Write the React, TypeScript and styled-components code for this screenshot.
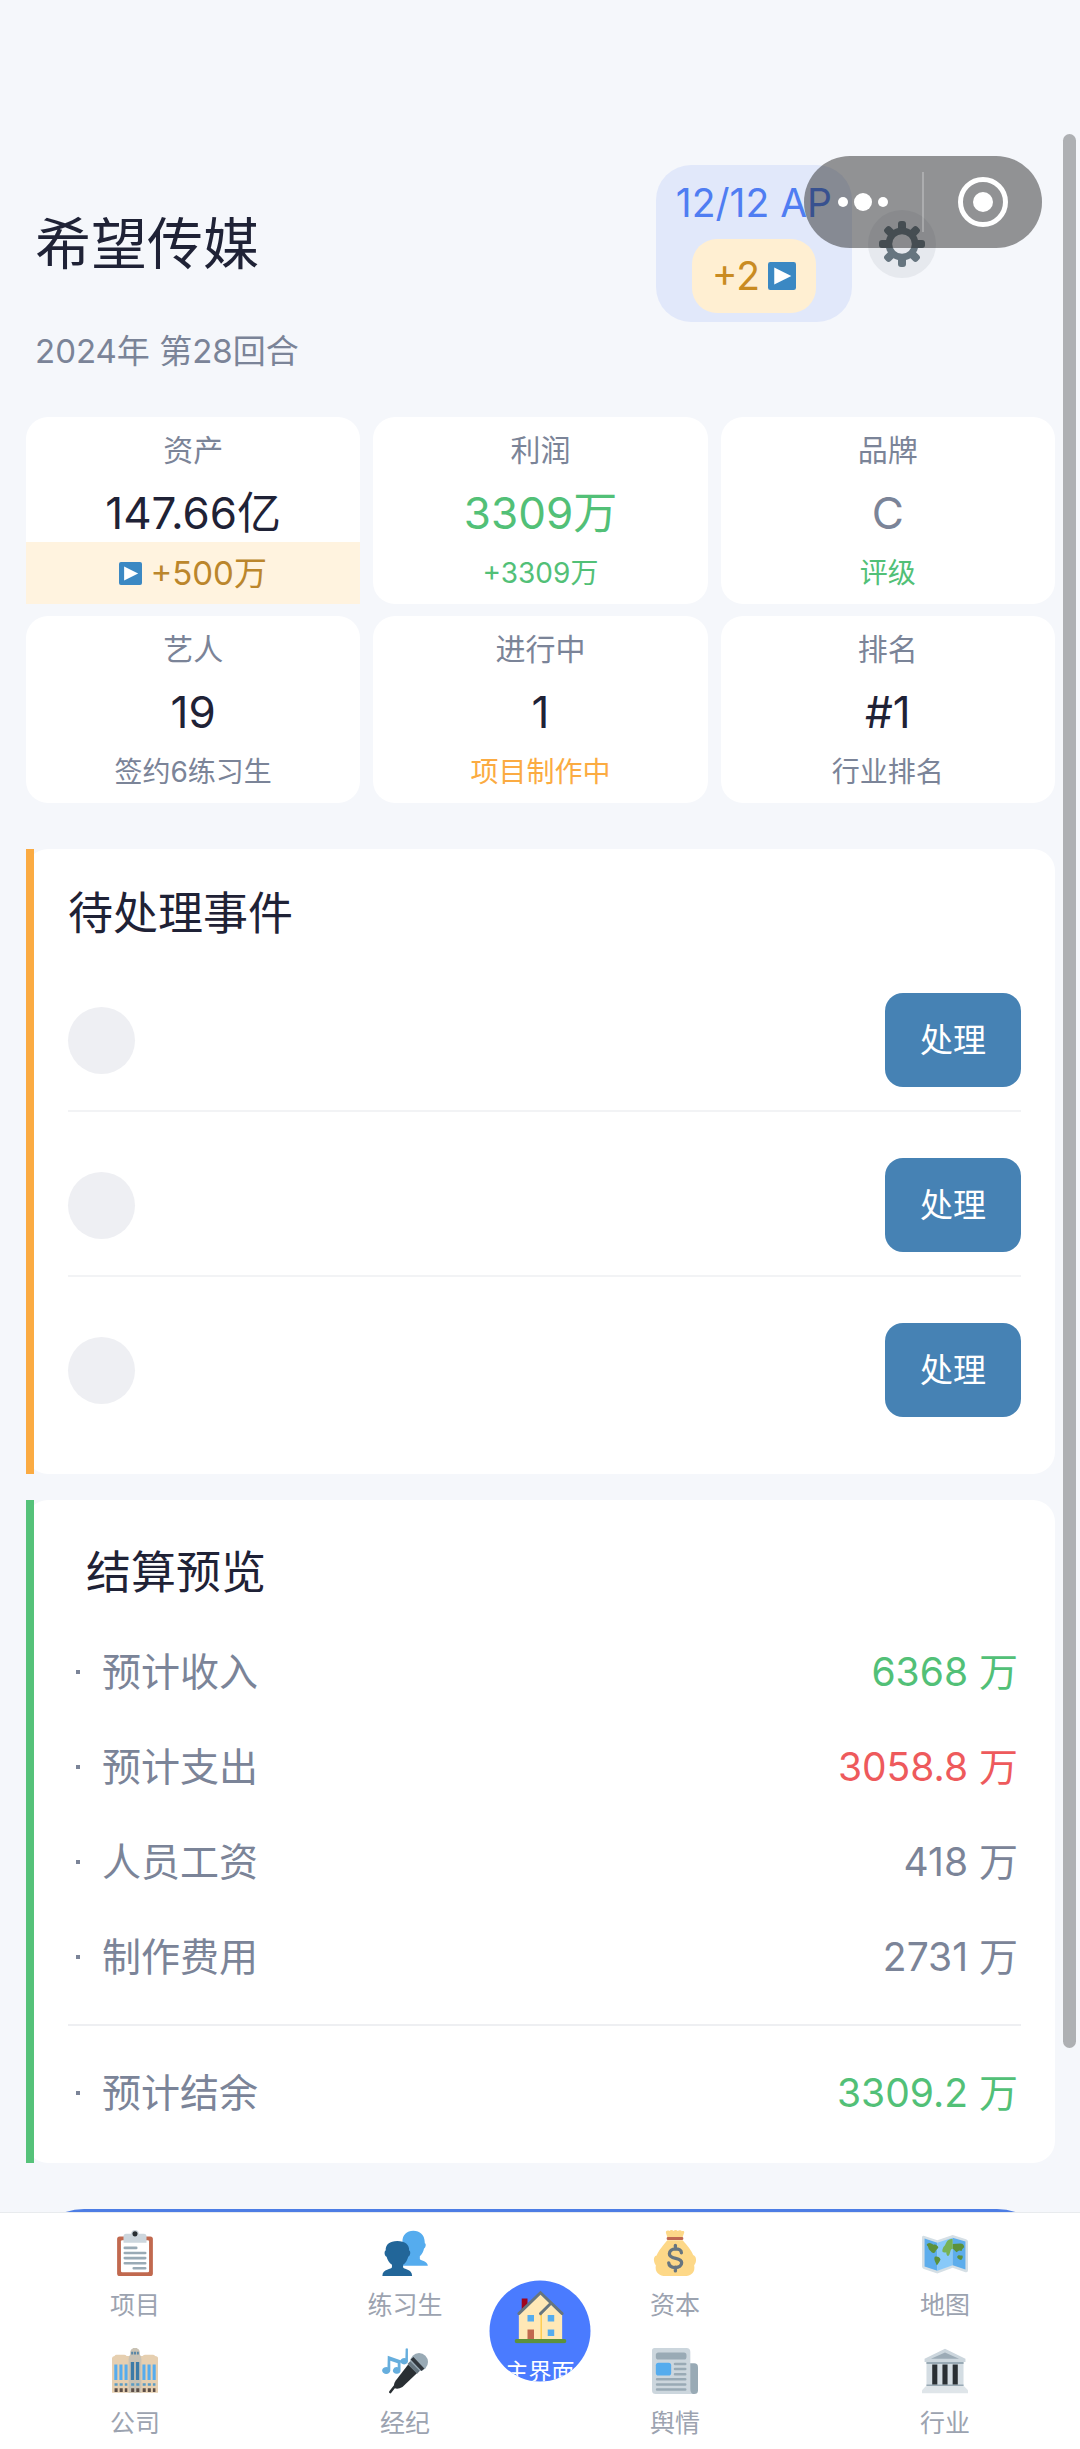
import React from 'react';
import styled, { createGlobalStyle } from 'styled-components';

const color = {
  page: '#f5f7fb',
  ink: '#1f2236',
  muted: '#7b8498',
  faint: '#9ca3b0',
  green: '#52c077',
  red: '#ee5a5c',
  orange: '#fbab42',
  amber: '#bb862c',
  blue: '#4a7bff',
};

const GlobalStyle = createGlobalStyle`
  *, *::before, *::after { box-sizing: border-box; }
  body {
    margin: 0;
    background: ${color.page};
    color: ${color.ink};
    font-family: Inter, 'Noto Sans CJK SC', sans-serif;
  }
  button { border: 0; padding: 0; font: inherit; color: inherit; background: none; cursor: pointer; }
  h1, h2, p, ul, dl, dt, dd { margin: 0; padding: 0; font-weight: 400; }
  svg { display: block; flex: none; }
`;

const Screen = styled.div`
  position: relative;
  display: flex;
  flex-direction: column;
  height: 100vh;
  overflow: hidden;
`;

const Content = styled.main`
  flex: 1;
  min-height: 0;
  overflow-y: auto;
  scrollbar-width: none;
  padding: 165px 25px 40px 26px;
`;

const ScrollThumb = styled.div`
  position: absolute;
  top: 134px;
  right: 4px;
  bottom: 401px;
  width: 13px;
  border-radius: 7px;
  background: #aeb0b3;
`;

/* Header */

const Header = styled.header`
  display: flex;
  align-items: center;
  gap: 16px;
  padding: 0 119px 0 9px;
`;

const CompanyName = styled.h1`
  flex: 1;
  font-size: 56px;
  line-height: 72px;
`;

const ApBadge = styled.div`
  display: flex;
  flex-direction: column;
  align-items: center;
  gap: 10px;
  padding: 12px 20px 9px;
  border-radius: 35px;
  background: #e1e8fa;
  color: #4f7df2;
  font-size: 39px;
  line-height: 52px;
`;

const ApBonus = styled.button`
  display: flex;
  align-items: center;
  gap: 8px;
  padding: 11px 20px;
  border-radius: 25px;
  background: #ffefd2;
  color: #c98b22;
`;

const SettingsButton = styled.button`
  display: grid;
  place-items: center;
  width: 68px;
  height: 68px;
  border-radius: 50%;
  background: #e6e9ee;
`;

const Turn = styled.p`
  margin: 4px 0 41px;
  padding-left: 9px;
  color: ${color.muted};
  font-size: 33px;
  line-height: 50px;
`;

const Capsule = styled.div`
  position: absolute;
  top: 156px;
  right: 38px;
  display: flex;
  align-items: center;
  height: 92px;
  border-radius: 46px;
  background: rgba(32, 32, 32, 0.47);
`;

const CapsuleButton = styled.button`
  display: grid;
  place-items: center;
  width: 118px;
  height: 92px;
`;

const CapsuleRule = styled.span`
  width: 2px;
  height: 60px;
  background: rgba(255, 255, 255, 0.25);
`;

/* Stats */

const StatGrid = styled.section`
  display: grid;
  grid-template-columns: repeat(3, 1fr);
  gap: 12px 13px;
  margin-bottom: 46px;
`;

const StatCard = styled.div`
  padding-top: 12px;
  border-radius: 22px;
  background: #fff;
  text-align: center;
`;

const StatLabel = styled.p`
  color: ${color.muted};
  font-size: 30px;
  line-height: 42px;
`;

const StatValue = styled.p<{ $tone: string }>`
  padding-top: 13px;
  color: ${(p) => p.$tone};
  font-size: 44px;
  line-height: 58px;
`;

const StatNote = styled.p<{ $tone: string }>`
  color: ${(p) => p.$tone};
  font-size: 28px;
  line-height: 62px;
`;

const StatBonus = styled.button`
  display: flex;
  align-items: center;
  justify-content: center;
  gap: 8px;
  width: 100%;
  background: #fff3df;
  color: ${color.amber};
  font-size: 33px;
  line-height: 62px;
`;

/* Panels */

const Panel = styled.section<{ $accent: string }>`
  position: relative;
  border-radius: 22px;
  background: #fff;

  &::before {
    content: '';
    position: absolute;
    inset: 0 auto 0 0;
    width: 8px;
    background: ${(p) => p.$accent};
  }
`;

const EventPanel = styled(Panel)`
  margin-bottom: 26px;
  padding: 34px 34px 34px 42px;
`;

const SettlementPanel = styled(Panel)`
  margin-bottom: 46px;
  padding: 42px 34px 23px 42px;
`;

const PanelTitle = styled.h2<{ $indent?: boolean }>`
  padding-left: ${(p) => (p.$indent ? '18px' : '0')};
  font-size: 45px;
  line-height: 62px;
`;

const EventList = styled.ul`
  display: flex;
  flex-direction: column;
  gap: 23px;
  margin-top: 25px;
  list-style: none;
`;

const EventRow = styled.li`
  display: flex;
  align-items: center;
  justify-content: space-between;
  padding: 23px 0;
  border-bottom: 2px solid #f2f3f5;

  &:last-child { border-bottom: 0; }
`;

const Avatar = styled.span`
  width: 67px;
  height: 67px;
  border-radius: 50%;
  background: #eeeff3;
`;

const HandleButton = styled.button`
  padding: 22px 35px;
  border-radius: 18px;
  background: #4682b4;
  color: #fff;
  font-size: 33px;
  line-height: 50px;
`;

const Ledger = styled.dl<{ $total?: boolean }>`
  margin-top: 20px;
  padding-top: ${(p) => (p.$total ? '19px' : '0')};
  border-top: ${(p) => (p.$total ? '2px solid #eeeff2' : '0')};
`;

const LedgerRow = styled.div`
  display: flex;
  align-items: center;
  justify-content: space-between;
  padding: 20px 3px 20px 8px;
  line-height: 55px;
`;

const LedgerLabel = styled.dt`
  display: flex;
  align-items: center;
  gap: 22px;
  color: ${color.muted};
  font-size: 39px;

  &::before {
    content: '';
    width: 4px;
    height: 4px;
    background: ${color.muted};
  }
`;

const LedgerValue = styled.dd<{ $tone: string }>`
  color: ${(p) => p.$tone};
  font-size: 39px;
`;

const NextTurnButton = styled.button`
  width: 100%;
  height: 116px;
  border-radius: 58px;
  background: #4d7de4;
`;

/* Bottom navigation */

const TabBar = styled.nav`
  position: relative;
  display: grid;
  grid-template-columns: repeat(4, 1fr);
  border-top: 1px solid #e8ebee;
  background: #fff;
`;

const Tab = styled.a`
  display: flex;
  flex-direction: column;
  align-items: center;
  gap: 11px;
  padding: 17px 0 8px;
  color: ${color.faint};
  font-size: 25px;
  line-height: 36px;
  text-decoration: none;
`;

const HomeTab = styled.a`
  position: absolute;
  top: 50%;
  left: 50%;
  transform: translate(-50%, -50%);
  display: flex;
  flex-direction: column;
  align-items: center;
  gap: 12px;
  width: 101px;
  height: 101px;
  padding-top: 9px;
  border-radius: 50%;
  overflow: hidden;
  background: ${color.blue};
  color: #fff;
  font-size: 23px;
  line-height: 32px;
  white-space: nowrap;
  text-decoration: none;
`;

/* Icons */

const Play = ({ size }: { size: number }) => (
  <svg width={size} height={size} viewBox="0 0 36 36" aria-hidden="true">
    <rect width="36" height="36" rx="3" fill="#3b88c3" />
    <path d="M8 7l22 11L8 29z" fill="#fff" />
  </svg>
);

const Gear = () => (
  <svg width="46" height="46" viewBox="-23 -23 46 46" aria-hidden="true">
    <g fill="#66757f">
      {[0, 45, 90, 135].map((a) => (
        <rect key={a} x="-4" y="-23" width="8" height="46" rx="3" transform={`rotate(${a})`} />
      ))}
      <circle r="16.5" />
    </g>
    <circle r="9.8" fill="#e6e9ee" />
  </svg>
);

const Icon = ({ children }: { children: React.ReactNode }) => (
  <svg width="46" height="46" viewBox="0 0 36 36" aria-hidden="true">{children}</svg>
);

const Clipboard = () => (
  <Icon>
    <rect x="4" y="5" width="28" height="31" rx="2" fill="#c1694f" />
    <rect x="7" y="8" width="22" height="25" rx="1" fill="#fff" />
    <path fill="#ccd6dd" d="M25 3h-4a3 3 0 0 0-6 0h-4a2 2 0 0 0-2 2v5h18V5a2 2 0 0 0-2-2z" />
    <circle cx="18" cy="3" r="2" fill="#292f33" />
    <path d="M10 14h9M10 18h16M10 22h16M10 26h16M17 30h9" stroke="#99aab5" strokeWidth="2" strokeLinecap="round" />
  </Icon>
);

const Trainees = () => (
  <Icon>
    <path fill="#55acee" d="M16 28V9C16 4 19.300.6 24.500.6s8.700 3.400 8.900 8.400l.1 1.300c1.100.2 1 3-.6 4.200-.6 2.700-1.700 4.600-3.300 6v2.100c0 1.400 5.900 1 6.300 5.400z" />
    <path fill="#226699" d="M.3 36c0-6 7.500-4.700 7.500-7v-1.800c-2.200-1.400-3.600-3.700-4.200-6.200-1.900-.7-2-4.800-.7-5C2.700 11.500 6 8.700 12 8.700s9.500 2.900 9.200 7.300c1.500.2 1.100 4.300-.7 5-.6 2.500-1.800 4.800-4 6.200V29c0 2.300 7.100 1 7.100 7z" />
  </Icon>
);

const MoneyBag = () => (
  <Icon>
    <path fill="#fdd888" d="M12 8C8.500 12 5 16.500 3.600 20 .6 20.500 1.200 25.500 3 27.500 2 33 5.500 36 11 36h14c6 0 9-3 8-8.500 2-2 2.200-7-.8-8C31 16 27.500 12 24 8z" />
    <path fill="#fdd888" d="M12.500 7L11 2.500C10.400.8 12-.2 13.600.8c1-1.100 2.500-.9 3.300 0 1-1.100 2.400-.9 3.200 0C21.300-.2 22.800.3 23.300.9c2-.7 2.300.8 1.500 2.200L23.500 7z" />
    <rect x="11.500" y="5.500" width="13" height="2.300" rx="1" fill="#bf6952" />
    <path d="M23 17.800c0-2-1.800-3-4.700-3-2.700 0-4.700 1.400-4.700 3.800 0 5 9.600 2.400 9.600 7.100 0 2.200-2 3.700-4.900 3.700-3 0-5-1.200-5.200-3.600M18.300 12v3M18.300 29v3" fill="none" stroke="#67757f" strokeWidth="2.600" strokeLinecap="round" />
  </Icon>
);

const WorldMap = () => (
  <Icon>
    <path fill="#d5dfe5" d="M0 5.500Q.5 4 2 4.700L12 8l12-4 10.500 3.200Q36 8 36 9v22.500q0 2-2 1.500L24 29.500 12 34 1.500 30.500Q0 30 0 28.500z" />
    <path fill="#5dadec" d="M2 6.600L12 10v21.800L2 28.500z" />
    <path fill="#88c9f9" d="M12 10l12-4v21.500l-12 4.300z" />
    <path fill="#5dadec" d="M24 6l10 3v22l-10-3.500z" />
    <g fill="#5c913b">
      <path d="M4 11c2-2 4 0 5 .5 2-.8 3 1 3.500 1.500 1 1.500-1.500 2-2 4-1 1.500-2 1-3 .5C7 16 5.500 16 5 14c0-1.500-2-2-1-3z" />
      <path d="M10 21c2-.8 4 .5 4.500 2-1 2-2 4-3 4.500C10.500 25 9 23 10 21z" />
      <path d="M24 11l6-.5c2 0 3 1 3 3-1 1-1.500 1-2 3l-2-.5-2 1.500-3-3z" />
      <path d="M27.500 21c1-2 2-1 4-1 1 1 0 3-1 3.500-1.500-.5-3-1-3-2.500z" />
    </g>
    <path fill="#77b255" d="M18 12c1.500-4 3-5 6-5v8c-2-1-1.500 3-3 5-1.500 1-2-1-2-2.500-2 .5-3.500 0-3-2 .5-2 1-2.500 2-3.500z" />
  </Icon>
);

const OfficeBuilding = () => (
  <Icon>
    <path fill="#e6cfb0" d="M0 8q0-1.500 2-1.700.5-1 1.500-1h6q1.200 0 2 1H24q.8-1 2-1h6q1.200 0 1.700 1Q36 6.500 36 8v27H0z" />
    <path fill="#c9c2b4" d="M13 9q0-3 1.300-4Q14 1 16 .5q2-2 4 0 2 .5 1.800 4.500Q23 6 23 9v26H13z" />
    <path d="M15 4h1.600M17.200 4h1.600M19.500 4H21" stroke="#5a87a6" strokeWidth="2" />
    <path d="M3 13v12M7 13v12M11 13v12M25 13v12M29 13v12M33 13v12" stroke="#55acee" strokeWidth="2.400" />
    <path d="M16 11v14M20 11v14" stroke="#3b7ba8" strokeWidth="2.600" />
    <path d="M2 28.500h10M15 28.500h6.500M24 28.500h10" stroke="#5a9cc4" strokeWidth="2" strokeDasharray="2.400 1.600" />
    <path d="M2 33h10M15 33h6.500M24 33h10" stroke="#5d4f48" strokeWidth="3" strokeDasharray="2.400 1.600" />
  </Icon>
);

const Microphone = () => (
  <Icon>
    <path fill="#66aedd" d="M4.500 6l10 3.500V18a3 2.600 0 1 1-2.200-3V12L6.500 10v7.500A3.200 2.700 0 1 1 4.300 15zM18.500.5q1.700-.8 1.800.5v9a3 2.500 0 1 1-2-2z" />
    <path d="M6.500 34.500L10 30" stroke="#292f33" strokeWidth="2" strokeLinecap="round" />
    <path fill="#292f33" d="M20.500 13l7 6.500L16 30.500q-3.500 2-6 1-1.500-3 .8-6z" />
    <circle cx="29" cy="11" r="7" fill="#99aab5" />
    <path d="M23.500 8l8.500 9" stroke="#31373d" strokeWidth="3" />
    <path d="M21 11.500l7.500 7.500" stroke="#66757f" strokeWidth="3" />
  </Icon>
);

const Newspaper = () => (
  <Icon>
    <path fill="#99aab5" d="M27 12h6q3 0 3 3v18q0 3-3 3h-6z" />
    <path fill="#ccd6dd" d="M2 0h25q3 0 3 3v29q0 3 2 4H3q-3 0-3-3V2q0-2 2-2z" />
    <rect x="3" y="3.500" width="24" height="5.500" rx="2" fill="#99aab5" />
    <rect x="3" y="11.500" width="12" height="10" rx="2" fill="#55acee" />
    <path d="M18 12.500h8M18 16.500h8M18 20.500h8M4 24.500h22M4 28.500h22M4 32.500h22" stroke="#99aab5" strokeWidth="2" strokeLinecap="round" />
  </Icon>
);

const Bank = () => (
  <Icon>
    <path fill="#d4dde3" d="M3.500 9h29v21h-29z" />
    <path fill="#ccd6dd" d="M18 .5L34 8.500V11H2V8.500z" />
    <path fill="#9cabb6" d="M18 3.500L29 8.500H7z" />
    <path fill="#99aab5" d="M3.500 11h29v1.500h-29zM3.500 28.500h29V30h-29z" />
    <path fill="#292f33" d="M8 13h4v15.500H8zM16 13h4v15.500h-4zM24 13h4v15.500h-4z" />
    <path fill="#dfe5e9" d="M3 30h30l3 3v2.500H0V33z" />
  </Icon>
);

const House = () => (
  <svg width="52" height="54" viewBox="0 0 36 37" aria-hidden="true">
    <path fill="#a0041e" d="M5 6h4v8H5z" />
    <path fill="#ffe8b6" d="M3 16L18 2l15 14v18H3z" />
    <path fill="#ffcc4d" d="M18 16h1v18h-1z" />
    <path d="M3 16.500L18 2l15 14.500M18 16.500l6.500-6.500" fill="none" stroke="#66757f" strokeWidth="2" strokeLinecap="round" />
    <path fill="#55acee" d="M9 17.500h4.500V22H9zM23 17.500h4.500V22H23zM23 27.500h4.500V32H23z" />
    <path fill="#c1694f" d="M9 27.500h4.500V35H9z" />
    <rect x="0" y="34" width="36" height="3" rx="1.500" fill="#5c913b" />
  </svg>
);

/* Data */

const stats = [
  { label: '资产', value: '147.66亿', tone: color.ink, bonus: '+500万' },
  { label: '利润', value: '3309万', tone: color.green, note: '+3309万', noteTone: color.green },
  { label: '品牌', value: 'C', tone: color.muted, note: '评级', noteTone: color.green },
  { label: '艺人', value: '19', tone: color.ink, note: '签约6练习生', noteTone: color.muted },
  { label: '进行中', value: '1', tone: color.ink, note: '项目制作中', noteTone: color.orange },
  { label: '排名', value: '#1', tone: color.ink, note: '行业排名', noteTone: color.muted },
];

const ledger = [
  { label: '预计收入', value: '6368 万', tone: color.green },
  { label: '预计支出', value: '3058.8 万', tone: color.red },
  { label: '人员工资', value: '418 万', tone: color.muted },
  { label: '制作费用', value: '2731 万', tone: color.muted },
];

const tabs = [
  { label: '项目', Glyph: Clipboard },
  { label: '练习生', Glyph: Trainees },
  { label: '资本', Glyph: MoneyBag },
  { label: '地图', Glyph: WorldMap },
  { label: '公司', Glyph: OfficeBuilding },
  { label: '经纪', Glyph: Microphone },
  { label: '舆情', Glyph: Newspaper },
  { label: '行业', Glyph: Bank },
];

export default function App() {
  return (
    <Screen lang="zh-CN">
      <GlobalStyle />
      <Content>
        <Header>
          <CompanyName>希望传媒</CompanyName>
          <ApBadge>
            <span>12/12 AP</span>
            <ApBonus type="button">+2<Play size={28} /></ApBonus>
          </ApBadge>
          <SettingsButton type="button" aria-label="设置"><Gear /></SettingsButton>
        </Header>
        <Turn>2024年 第28回合</Turn>

        <StatGrid>
          {stats.map((s) => (
            <StatCard key={s.label}>
              <StatLabel>{s.label}</StatLabel>
              <StatValue $tone={s.tone}>{s.value}</StatValue>
              {s.bonus ? (
                <StatBonus type="button"><Play size={23} />{s.bonus}</StatBonus>
              ) : (
                <StatNote $tone={s.noteTone || color.muted}>{s.note}</StatNote>
              )}
            </StatCard>
          ))}
        </StatGrid>

        <EventPanel $accent={color.orange}>
          <PanelTitle>待处理事件</PanelTitle>
          <EventList>
            {[1, 2, 3].map((id) => (
              <EventRow key={id}>
                <Avatar />
                <HandleButton type="button">处理</HandleButton>
              </EventRow>
            ))}
          </EventList>
        </EventPanel>

        <SettlementPanel $accent="#55c279">
          <PanelTitle $indent>结算预览</PanelTitle>
          <Ledger>
            {ledger.map((row) => (
              <LedgerRow key={row.label}>
                <LedgerLabel>{row.label}</LedgerLabel>
                <LedgerValue $tone={row.tone}>{row.value}</LedgerValue>
              </LedgerRow>
            ))}
          </Ledger>
          <Ledger $total>
            <LedgerRow>
              <LedgerLabel>预计结余</LedgerLabel>
              <LedgerValue $tone={color.green}>3309.2 万</LedgerValue>
            </LedgerRow>
          </Ledger>
        </SettlementPanel>

        <NextTurnButton type="button" aria-label="下一回合" />
      </Content>

      <TabBar>
        {tabs.map(({ label, Glyph }) => (
          <Tab key={label} href={`#${label}`}><Glyph />{label}</Tab>
        ))}
        <HomeTab href="#主界面"><House />主界面</HomeTab>
      </TabBar>

      <ScrollThumb />
      <Capsule>
        <CapsuleButton type="button" aria-label="更多">
          <svg width="50" height="18" viewBox="0 0 50 18" fill="#fff" aria-hidden="true">
            <circle cx="5" cy="9" r="5" />
            <circle cx="25" cy="9" r="9" />
            <circle cx="45" cy="9" r="5" />
          </svg>
        </CapsuleButton>
        <CapsuleRule />
        <CapsuleButton type="button" aria-label="关闭">
          <svg width="50" height="50" viewBox="0 0 50 50" aria-hidden="true">
            <circle cx="25" cy="25" r="22.500" fill="none" stroke="#fff" strokeWidth="5" />
            <circle cx="25" cy="25" r="10" fill="#fff" />
          </svg>
        </CapsuleButton>
      </Capsule>
    </Screen>
  );
}
